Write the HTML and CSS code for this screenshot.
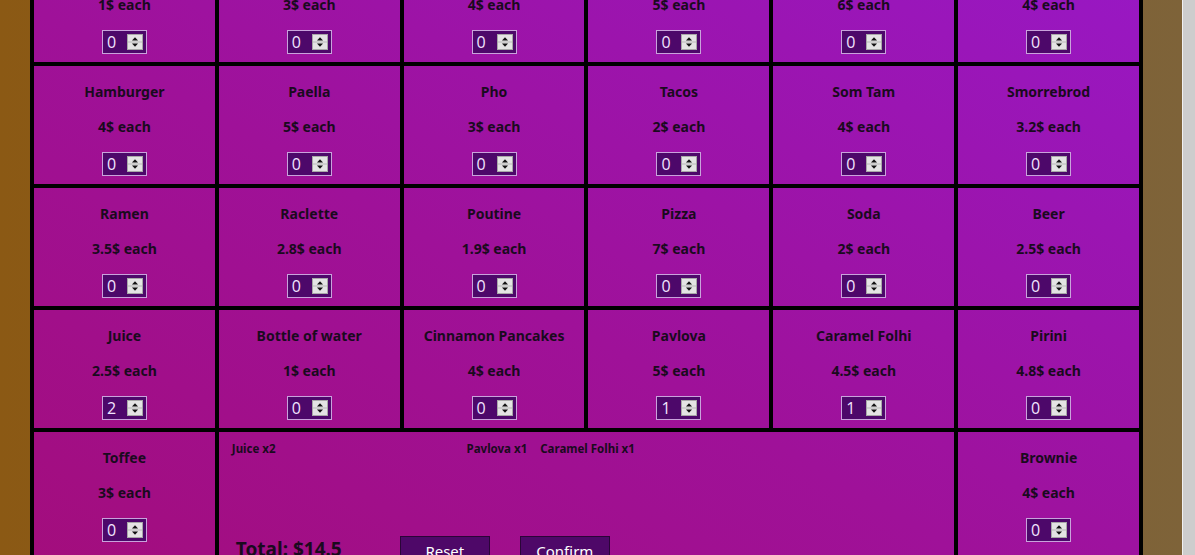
FILE: index.html
```html
<!DOCTYPE html>
<html lang="en">
<head>
<meta charset="utf-8">
<title>Food order</title>
<link rel="stylesheet" href="styles.css">
</head>
<body>
<div class="page">
  <main class="menu">
    <div class="cell"><div class="name">Sushi</div><div class="price">1$ each</div><div class="qty"><span class="val">0</span><svg class="spin" viewBox="0 0 16 16"><rect x="0.5" y="0.5" width="15" height="15" fill="#e4e4e4" stroke="#a8a8a8"/><line x1="1" y1="8" x2="15" y2="8" stroke="#b8b8b8"/><path d="M8 3.2L5 6.4H11Z" fill="#111"/><path d="M5 9.6H11L8 12.8Z" fill="#111"/></svg></div></div>
    <div class="cell"><div class="name">Burrito</div><div class="price">3$ each</div><div class="qty"><span class="val">0</span><svg class="spin" viewBox="0 0 16 16"><rect x="0.5" y="0.5" width="15" height="15" fill="#e4e4e4" stroke="#a8a8a8"/><line x1="1" y1="8" x2="15" y2="8" stroke="#b8b8b8"/><path d="M8 3.2L5 6.4H11Z" fill="#111"/><path d="M5 9.6H11L8 12.8Z" fill="#111"/></svg></div></div>
    <div class="cell"><div class="name">Croissant</div><div class="price">4$ each</div><div class="qty"><span class="val">0</span><svg class="spin" viewBox="0 0 16 16"><rect x="0.5" y="0.5" width="15" height="15" fill="#e4e4e4" stroke="#a8a8a8"/><line x1="1" y1="8" x2="15" y2="8" stroke="#b8b8b8"/><path d="M8 3.2L5 6.4H11Z" fill="#111"/><path d="M5 9.6H11L8 12.8Z" fill="#111"/></svg></div></div>
    <div class="cell"><div class="name">Kebab</div><div class="price">5$ each</div><div class="qty"><span class="val">0</span><svg class="spin" viewBox="0 0 16 16"><rect x="0.5" y="0.5" width="15" height="15" fill="#e4e4e4" stroke="#a8a8a8"/><line x1="1" y1="8" x2="15" y2="8" stroke="#b8b8b8"/><path d="M8 3.2L5 6.4H11Z" fill="#111"/><path d="M5 9.6H11L8 12.8Z" fill="#111"/></svg></div></div>
    <div class="cell"><div class="name">Lasagna</div><div class="price">6$ each</div><div class="qty"><span class="val">0</span><svg class="spin" viewBox="0 0 16 16"><rect x="0.5" y="0.5" width="15" height="15" fill="#e4e4e4" stroke="#a8a8a8"/><line x1="1" y1="8" x2="15" y2="8" stroke="#b8b8b8"/><path d="M8 3.2L5 6.4H11Z" fill="#111"/><path d="M5 9.6H11L8 12.8Z" fill="#111"/></svg></div></div>
    <div class="cell"><div class="name">Curry</div><div class="price">4$ each</div><div class="qty"><span class="val">0</span><svg class="spin" viewBox="0 0 16 16"><rect x="0.5" y="0.5" width="15" height="15" fill="#e4e4e4" stroke="#a8a8a8"/><line x1="1" y1="8" x2="15" y2="8" stroke="#b8b8b8"/><path d="M8 3.2L5 6.4H11Z" fill="#111"/><path d="M5 9.6H11L8 12.8Z" fill="#111"/></svg></div></div>

    <div class="cell"><div class="name">Hamburger</div><div class="price">4$ each</div><div class="qty"><span class="val">0</span><svg class="spin" viewBox="0 0 16 16"><rect x="0.5" y="0.5" width="15" height="15" fill="#e4e4e4" stroke="#a8a8a8"/><line x1="1" y1="8" x2="15" y2="8" stroke="#b8b8b8"/><path d="M8 3.2L5 6.4H11Z" fill="#111"/><path d="M5 9.6H11L8 12.8Z" fill="#111"/></svg></div></div>
    <div class="cell"><div class="name">Paella</div><div class="price">5$ each</div><div class="qty"><span class="val">0</span><svg class="spin" viewBox="0 0 16 16"><rect x="0.5" y="0.5" width="15" height="15" fill="#e4e4e4" stroke="#a8a8a8"/><line x1="1" y1="8" x2="15" y2="8" stroke="#b8b8b8"/><path d="M8 3.2L5 6.4H11Z" fill="#111"/><path d="M5 9.6H11L8 12.8Z" fill="#111"/></svg></div></div>
    <div class="cell"><div class="name">Pho</div><div class="price">3$ each</div><div class="qty"><span class="val">0</span><svg class="spin" viewBox="0 0 16 16"><rect x="0.5" y="0.5" width="15" height="15" fill="#e4e4e4" stroke="#a8a8a8"/><line x1="1" y1="8" x2="15" y2="8" stroke="#b8b8b8"/><path d="M8 3.2L5 6.4H11Z" fill="#111"/><path d="M5 9.6H11L8 12.8Z" fill="#111"/></svg></div></div>
    <div class="cell"><div class="name">Tacos</div><div class="price">2$ each</div><div class="qty"><span class="val">0</span><svg class="spin" viewBox="0 0 16 16"><rect x="0.5" y="0.5" width="15" height="15" fill="#e4e4e4" stroke="#a8a8a8"/><line x1="1" y1="8" x2="15" y2="8" stroke="#b8b8b8"/><path d="M8 3.2L5 6.4H11Z" fill="#111"/><path d="M5 9.6H11L8 12.8Z" fill="#111"/></svg></div></div>
    <div class="cell"><div class="name">Som Tam</div><div class="price">4$ each</div><div class="qty"><span class="val">0</span><svg class="spin" viewBox="0 0 16 16"><rect x="0.5" y="0.5" width="15" height="15" fill="#e4e4e4" stroke="#a8a8a8"/><line x1="1" y1="8" x2="15" y2="8" stroke="#b8b8b8"/><path d="M8 3.2L5 6.4H11Z" fill="#111"/><path d="M5 9.6H11L8 12.8Z" fill="#111"/></svg></div></div>
    <div class="cell"><div class="name">Smorrebrod</div><div class="price">3.2$ each</div><div class="qty"><span class="val">0</span><svg class="spin" viewBox="0 0 16 16"><rect x="0.5" y="0.5" width="15" height="15" fill="#e4e4e4" stroke="#a8a8a8"/><line x1="1" y1="8" x2="15" y2="8" stroke="#b8b8b8"/><path d="M8 3.2L5 6.4H11Z" fill="#111"/><path d="M5 9.6H11L8 12.8Z" fill="#111"/></svg></div></div>

    <div class="cell"><div class="name">Ramen</div><div class="price">3.5$ each</div><div class="qty"><span class="val">0</span><svg class="spin" viewBox="0 0 16 16"><rect x="0.5" y="0.5" width="15" height="15" fill="#e4e4e4" stroke="#a8a8a8"/><line x1="1" y1="8" x2="15" y2="8" stroke="#b8b8b8"/><path d="M8 3.2L5 6.4H11Z" fill="#111"/><path d="M5 9.6H11L8 12.8Z" fill="#111"/></svg></div></div>
    <div class="cell"><div class="name">Raclette</div><div class="price">2.8$ each</div><div class="qty"><span class="val">0</span><svg class="spin" viewBox="0 0 16 16"><rect x="0.5" y="0.5" width="15" height="15" fill="#e4e4e4" stroke="#a8a8a8"/><line x1="1" y1="8" x2="15" y2="8" stroke="#b8b8b8"/><path d="M8 3.2L5 6.4H11Z" fill="#111"/><path d="M5 9.6H11L8 12.8Z" fill="#111"/></svg></div></div>
    <div class="cell"><div class="name">Poutine</div><div class="price">1.9$ each</div><div class="qty"><span class="val">0</span><svg class="spin" viewBox="0 0 16 16"><rect x="0.5" y="0.5" width="15" height="15" fill="#e4e4e4" stroke="#a8a8a8"/><line x1="1" y1="8" x2="15" y2="8" stroke="#b8b8b8"/><path d="M8 3.2L5 6.4H11Z" fill="#111"/><path d="M5 9.6H11L8 12.8Z" fill="#111"/></svg></div></div>
    <div class="cell"><div class="name">Pizza</div><div class="price">7$ each</div><div class="qty"><span class="val">0</span><svg class="spin" viewBox="0 0 16 16"><rect x="0.5" y="0.5" width="15" height="15" fill="#e4e4e4" stroke="#a8a8a8"/><line x1="1" y1="8" x2="15" y2="8" stroke="#b8b8b8"/><path d="M8 3.2L5 6.4H11Z" fill="#111"/><path d="M5 9.6H11L8 12.8Z" fill="#111"/></svg></div></div>
    <div class="cell"><div class="name">Soda</div><div class="price">2$ each</div><div class="qty"><span class="val">0</span><svg class="spin" viewBox="0 0 16 16"><rect x="0.5" y="0.5" width="15" height="15" fill="#e4e4e4" stroke="#a8a8a8"/><line x1="1" y1="8" x2="15" y2="8" stroke="#b8b8b8"/><path d="M8 3.2L5 6.4H11Z" fill="#111"/><path d="M5 9.6H11L8 12.8Z" fill="#111"/></svg></div></div>
    <div class="cell"><div class="name">Beer</div><div class="price">2.5$ each</div><div class="qty"><span class="val">0</span><svg class="spin" viewBox="0 0 16 16"><rect x="0.5" y="0.5" width="15" height="15" fill="#e4e4e4" stroke="#a8a8a8"/><line x1="1" y1="8" x2="15" y2="8" stroke="#b8b8b8"/><path d="M8 3.2L5 6.4H11Z" fill="#111"/><path d="M5 9.6H11L8 12.8Z" fill="#111"/></svg></div></div>

    <div class="cell"><div class="name">Juice</div><div class="price">2.5$ each</div><div class="qty"><span class="val">2</span><svg class="spin" viewBox="0 0 16 16"><rect x="0.5" y="0.5" width="15" height="15" fill="#e4e4e4" stroke="#a8a8a8"/><line x1="1" y1="8" x2="15" y2="8" stroke="#b8b8b8"/><path d="M8 3.2L5 6.4H11Z" fill="#111"/><path d="M5 9.6H11L8 12.8Z" fill="#111"/></svg></div></div>
    <div class="cell"><div class="name">Bottle of water</div><div class="price">1$ each</div><div class="qty"><span class="val">0</span><svg class="spin" viewBox="0 0 16 16"><rect x="0.5" y="0.5" width="15" height="15" fill="#e4e4e4" stroke="#a8a8a8"/><line x1="1" y1="8" x2="15" y2="8" stroke="#b8b8b8"/><path d="M8 3.2L5 6.4H11Z" fill="#111"/><path d="M5 9.6H11L8 12.8Z" fill="#111"/></svg></div></div>
    <div class="cell"><div class="name">Cinnamon Pancakes</div><div class="price">4$ each</div><div class="qty"><span class="val">0</span><svg class="spin" viewBox="0 0 16 16"><rect x="0.5" y="0.5" width="15" height="15" fill="#e4e4e4" stroke="#a8a8a8"/><line x1="1" y1="8" x2="15" y2="8" stroke="#b8b8b8"/><path d="M8 3.2L5 6.4H11Z" fill="#111"/><path d="M5 9.6H11L8 12.8Z" fill="#111"/></svg></div></div>
    <div class="cell"><div class="name">Pavlova</div><div class="price">5$ each</div><div class="qty"><span class="val">1</span><svg class="spin" viewBox="0 0 16 16"><rect x="0.5" y="0.5" width="15" height="15" fill="#e4e4e4" stroke="#a8a8a8"/><line x1="1" y1="8" x2="15" y2="8" stroke="#b8b8b8"/><path d="M8 3.2L5 6.4H11Z" fill="#111"/><path d="M5 9.6H11L8 12.8Z" fill="#111"/></svg></div></div>
    <div class="cell"><div class="name">Caramel Folhi</div><div class="price">4.5$ each</div><div class="qty"><span class="val">1</span><svg class="spin" viewBox="0 0 16 16"><rect x="0.5" y="0.5" width="15" height="15" fill="#e4e4e4" stroke="#a8a8a8"/><line x1="1" y1="8" x2="15" y2="8" stroke="#b8b8b8"/><path d="M8 3.2L5 6.4H11Z" fill="#111"/><path d="M5 9.6H11L8 12.8Z" fill="#111"/></svg></div></div>
    <div class="cell"><div class="name">Pirini</div><div class="price">4.8$ each</div><div class="qty"><span class="val">0</span><svg class="spin" viewBox="0 0 16 16"><rect x="0.5" y="0.5" width="15" height="15" fill="#e4e4e4" stroke="#a8a8a8"/><line x1="1" y1="8" x2="15" y2="8" stroke="#b8b8b8"/><path d="M8 3.2L5 6.4H11Z" fill="#111"/><path d="M5 9.6H11L8 12.8Z" fill="#111"/></svg></div></div>

    <div class="cell"><div class="name">Toffee</div><div class="price">3$ each</div><div class="qty"><span class="val">0</span><svg class="spin" viewBox="0 0 16 16"><rect x="0.5" y="0.5" width="15" height="15" fill="#e4e4e4" stroke="#a8a8a8"/><line x1="1" y1="8" x2="15" y2="8" stroke="#b8b8b8"/><path d="M8 3.2L5 6.4H11Z" fill="#111"/><path d="M5 9.6H11L8 12.8Z" fill="#111"/></svg></div></div>
    <section class="cell summary">
      <div class="orders">
        <span class="order">Juice x2</span>
        <span class="order empty"></span>
        <span class="order empty"></span>
        <span class="order">Pavlova x1</span>
        <span class="order">Caramel Folhi x1</span>
      </div>
      <div class="footer">
        <span class="total">Total: $14.5</span>
        <button class="btn">Reset</button>
        <button class="btn">Confirm</button>
      </div>
    </section>
    <div class="cell"><div class="name">Brownie</div><div class="price">4$ each</div><div class="qty"><span class="val">0</span><svg class="spin" viewBox="0 0 16 16"><rect x="0.5" y="0.5" width="15" height="15" fill="#e4e4e4" stroke="#a8a8a8"/><line x1="1" y1="8" x2="15" y2="8" stroke="#b8b8b8"/><path d="M8 3.2L5 6.4H11Z" fill="#111"/><path d="M5 9.6H11L8 12.8Z" fill="#111"/></svg></div></div>
  </main>
</div>
<div class="scrollbar"><div class="thumb"></div></div>
</body>
</html>
```

FILE: styles.css
```css
html, body {
  margin: 0;
  padding: 0;
  height: 555px;
  overflow: hidden;
}

body {
  display: flex;
  font-family: "Noto Sans", "Open Sans", sans-serif;
  color: #1a0a1e;
}

.page {
  flex: 1;
  background: linear-gradient(to right, #8b5914, #7e6339);
  padding-left: 30px;
  overflow: hidden;
}

.menu {
  width: 1113px;
  box-sizing: border-box;
  margin-top: -60px;
  border: 2px solid #000;
  display: grid;
  grid-template-columns: repeat(6, 1fr);
  grid-auto-rows: minmax(122px, auto);
  background: linear-gradient(to top right, #a30d7b 0%, #9f1199 45%, #9818c6 100%);
}

.cell {
  border: 2px solid #000;
  display: flex;
  flex-direction: column;
  align-items: center;
  padding-top: 16px;
  min-width: 0;
}

.name,
.price {
  font-size: 14px;
  font-weight: 700;
  line-height: 20px;
  white-space: nowrap;
}

.price {
  margin-top: 15px;
}

.qty {
  margin-top: 15px;
  width: 45px;
  height: 24px;
  box-sizing: border-box;
  border: 1px solid #c9a3dc;
  background: #4d086a;
  display: flex;
  align-items: center;
  justify-content: space-between;
  padding: 0 3px 0 4px;
}

.val {
  font-size: 16px;
  line-height: 20px;
  color: #f2e4ff;
  font-family: "Open Sans", "Noto Sans", sans-serif;
}

.spin {
  width: 16px;
  height: 16px;
  display: block;
}

.summary {
  grid-column: span 4;
  align-items: stretch;
  padding: 9px 13px 0;
  min-height: 150px;
}

.orders {
  display: flex;
  gap: 13px;
  font-size: 11.5px;
  font-weight: 700;
  line-height: 16px;
}

.order.empty {
  width: 76px;
}

.footer {
  display: flex;
  align-items: center;
  margin-top: 79px;
  padding-left: 4px;
}

.total {
  width: 164px;
  font-size: 19px;
  font-weight: 700;
  line-height: 26px;
  margin-bottom: 4px;
}

.btn {
  width: 90px;
  height: 30px;
  margin-right: 30px;
  background: #4e0868;
  border: 1px solid #2a0538;
  color: #fff;
  font-family: "Noto Sans", "Open Sans", sans-serif;
  font-size: 15px;
  padding: 0;
}

.scrollbar {
  width: 13px;
  background: #f0f0f0;
  display: flex;
  justify-content: flex-end;
}

.thumb {
  width: 12px;
  background: #cdcdcd;
}
```
